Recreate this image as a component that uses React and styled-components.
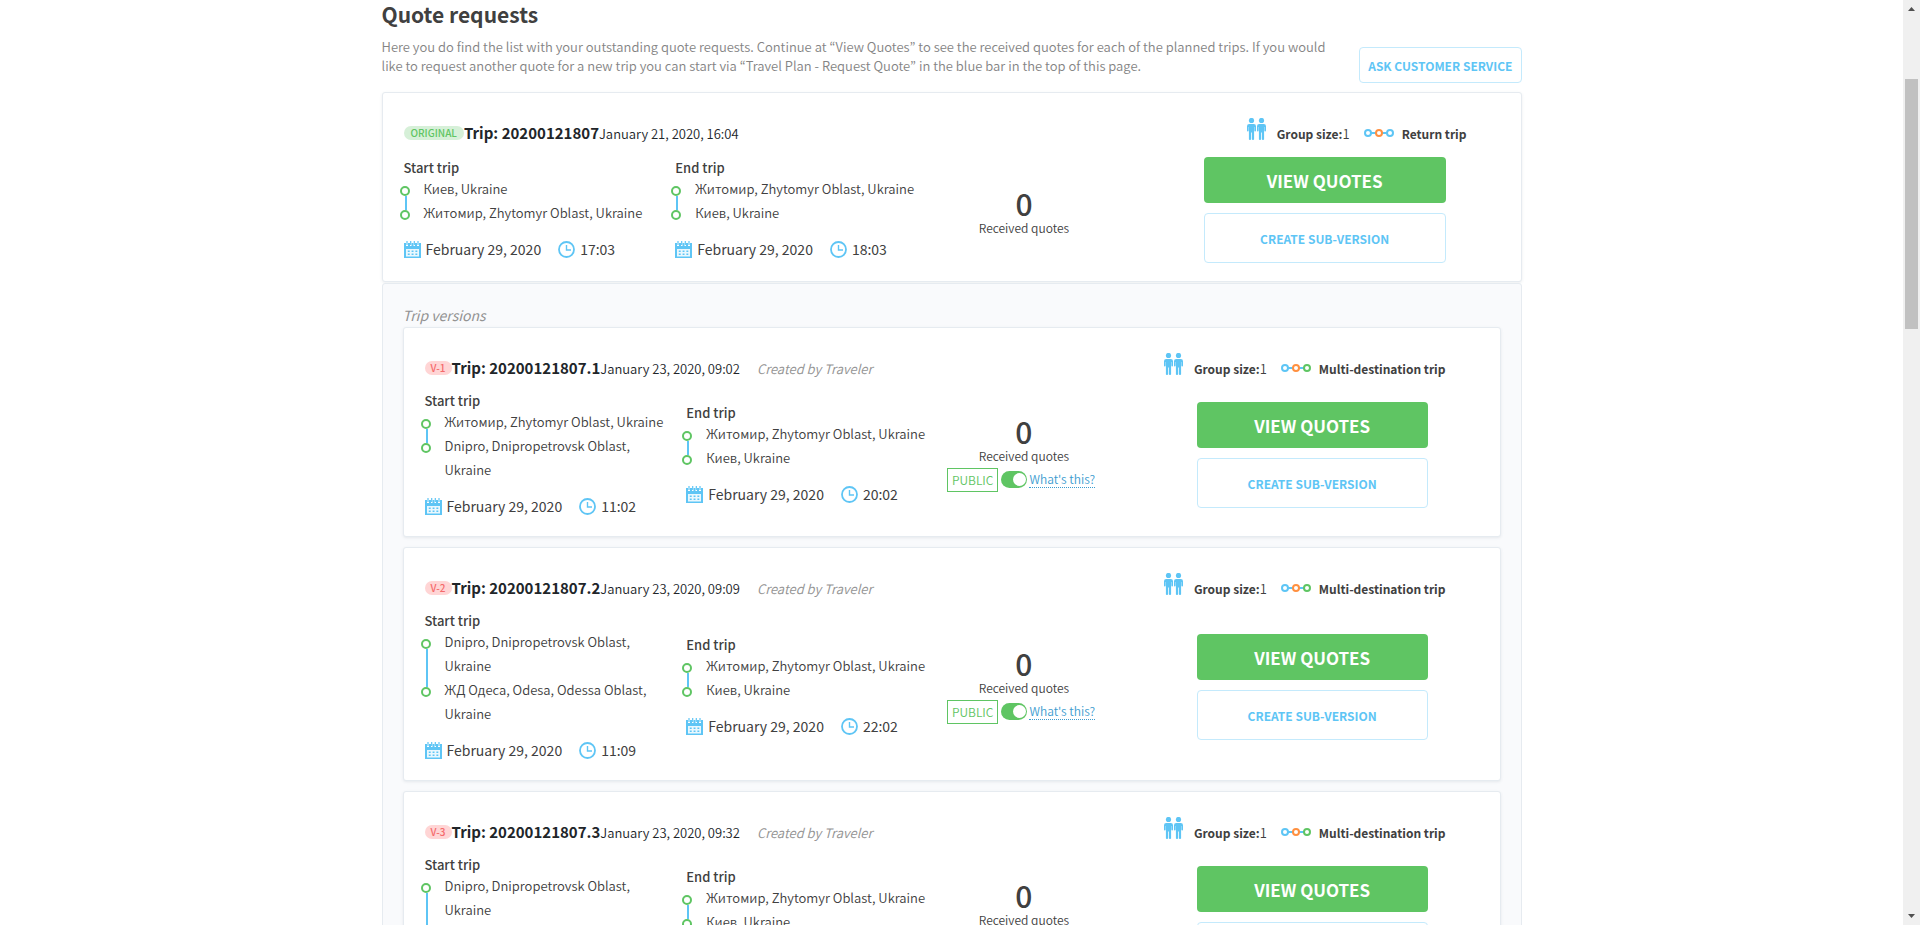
import React from "react";
import styled, { createGlobalStyle } from "styled-components";

const color = {
  text: "#404040",
  dark: "#212529",
  muted: "#848484",
  blue: "#5ec5f5",
  paleBlue: "#c4eafc",
  green: "#5fc563",
  orange: "#ff9040",
  border: "#e6ebf0",
  panel: "#f9fafc",
};

const GlobalStyle = createGlobalStyle`
  * { box-sizing: border-box; }
  body {
    margin: 0;
    background: #ffffff;
    color: ${color.text};
    font-family: "Noto Sans CJK KR", "Noto Sans", sans-serif;
    font-size: 13px;
    font-weight: 350;
    line-height: 19px;
  }
  button { font-family: inherit; cursor: pointer; }
`;

const Viewport = styled.div`
  display: flex;
  height: 100vh;
  overflow: hidden;
`;

const Page = styled.main`
  flex: 1;
  min-width: 0;
  overflow: hidden;
`;

const Container = styled.div`
  max-width: 1140px;
  margin: 0 auto;
`;

const ScrollTrack = styled.div`
  display: flex;
  flex-direction: column;
  align-items: center;
  width: 17px;
  background: #f0f0f0;
`;

const ScrollArrow = styled.svg`
  display: block;
  width: 17px;
  height: 17px;
  fill: #505050;
`;

const ScrollThumb = styled.div`
  width: 13px;
  height: 27%;
  margin: 62px 0 auto;
  background: #c1c1c1;
`;

const Title = styled.h1`
  margin: 0 0 9px;
  font-size: 21px;
  line-height: 28px;
  font-weight: 700;
`;

const Intro = styled.div`
  display: flex;
  align-items: flex-end;
  justify-content: space-between;
  margin-bottom: 9px;
`;

const IntroText = styled.p`
  flex: 0 1 956px;
  margin: 0;
  padding-bottom: 8px;
  color: ${color.muted};
`;

const OutlineButton = styled.button`
  height: ${(p) => (p.$large ? "50px" : "36px")};
  padding: 0 8px;
  border: 1px solid ${color.paleBlue};
  border-radius: 4px;
  background: #ffffff;
  color: ${color.blue};
  font-size: 12px;
  font-weight: 700;
  white-space: nowrap;
`;

const PrimaryButton = styled.button`
  height: 46px;
  border: 0;
  border-radius: 4px;
  background: ${color.green};
  color: #ffffff;
  font-size: 17px;
  font-weight: 700;
`;

const Card = styled.article`
  padding: 0 21px 17px;
  border: 1px solid ${color.border};
  border-radius: 3px;
  background: #ffffff;
  box-shadow: 0 1px 3px rgba(60, 80, 100, 0.1);
`;

const CardHeader = styled.header`
  display: flex;
  align-items: center;
  height: 64px;
  padding: 28px 0 12px;
  white-space: nowrap;
`;

const Badge = styled.span`
  height: 14px;
  padding: 0 ${(p) => (p.$original ? "7px" : "6px")};
  border-radius: 7px;
  background: ${(p) => (p.$original ? "#d6f0d8" : "#ffd5d5")};
  color: ${(p) => (p.$original ? color.green : "#f5696b")};
  font-size: 10px;
  line-height: 14px;
  font-weight: 500;
`;

const TripName = styled.h2`
  margin: 0;
  color: ${color.dark};
  font-size: 15px;
  line-height: 24px;
  font-weight: 700;
`;

const Created = styled.time`
  color: ${color.dark};
`;

const Author = styled.em`
  margin-left: 17px;
  color: #929292;
`;

const Facts = styled.div`
  display: flex;
  align-items: center;
  gap: 8px;
  height: 24px;
  margin: 0 33px 0 auto;
`;

const FactLabel = styled.span`
  font-size: 12px;
  font-weight: 700;
`;

const GroupSize = styled.span`
  margin-right: 6px;
  color: ${color.text};
`;

const PeopleSvg = styled.svg`
  align-self: flex-end;
  width: 20px;
  height: 22px;
  margin: 0 2px 5px 0;
  fill: ${color.blue};
`;

const RouteSvg = styled.svg`
  width: 30px;
  height: 10px;
  fill: #ffffff;
  stroke-width: 2;
`;

const CardBody = styled.div`
  display: grid;
  grid-template-columns: ${(p) =>
    p.$nested
      ? "262fr 261fr 154fr 96fr 231fr 51fr"
      : "272fr 273fr 152fr 104fr 242fr 54fr"};
  align-items: center;
  min-height: 107px;
`;

const Leg = styled.section`
  min-width: 0;
  padding-bottom: 1px;
`;

const LegTitle = styled.h3`
  margin: 0;
  font-size: 13px;
  line-height: 18px;
  font-weight: 500;
`;

const Stops = styled.ul`
  margin: 0 12px 12px -4px;
  padding: 0;
  list-style: none;
  line-height: 24px;
`;

const Stop = styled.li`
  display: flex;
  gap: 14px;
`;

const Marker = styled.span`
  display: flex;
  flex-direction: column;
  flex: 0 0 10px;
  padding-top: 9px;
`;

const Dot = styled.span`
  height: 10px;
  border: 2px solid ${color.green};
  border-radius: 50%;
`;

const Line = styled.span`
  flex: 1;
  width: 2px;
  margin: 0 0 -9px 5px;
  background: ${color.blue};
`;

const When = styled.div`
  display: flex;
  align-items: center;
  gap: 5px;
  font-size: 14px;
  font-weight: 400;
  line-height: 24px;
`;

const DateText = styled.span`
  margin-right: 12px;
`;

const SmallIcon = styled.svg`
  width: 17px;
  height: 17px;
  flex: none;
`;

const Quotes = styled.section`
  padding: 7px 0 1px;
  white-space: nowrap;
`;

const QuoteCount = styled.div`
  margin-bottom: 1px;
  font-size: 30px;
  line-height: 30px;
  font-weight: 500;
  text-align: center;
`;

const QuoteLabel = styled.div`
  margin-bottom: 4px;
  font-size: 12px;
  line-height: 17px;
  text-align: center;
`;

const Visibility = styled.div`
  display: flex;
  align-items: center;
  height: 24px;
  margin-bottom: 10px;
  font-size: 12px;
`;

const PublicLabel = styled.label`
  height: 24px;
  margin-right: 3px;
  padding: 0 4px;
  border: 1px solid ${color.green};
  color: ${color.green};
  line-height: 22px;
`;

const Switch = styled.input`
  appearance: none;
  display: flex;
  justify-content: flex-end;
  width: 26px;
  height: 17px;
  margin: 0 2px 0 0;
  padding: 2px 1px;
  border-radius: 9px;
  background: ${color.green};
  cursor: pointer;

  &::before {
    content: "";
    width: 13px;
    height: 13px;
    border-radius: 50%;
    background: #ffffff;
  }
`;

const HelpLink = styled.a`
  border-bottom: 1px dotted #3c9ccf;
  color: #3c9ccf;
  line-height: 16px;
  text-decoration: none;
`;

const Actions = styled.div`
  grid-column: 5;
  display: flex;
  flex-direction: column;
  gap: 10px;
  padding-bottom: 1px;
`;

const Versions = styled.section`
  display: flex;
  flex-direction: column;
  gap: 10px;
  margin-top: 1px;
  padding: 21px 20px;
  border: 1px solid ${color.border};
  border-radius: 3px;
  background: ${color.panel};
`;

const VersionsTitle = styled.h2`
  margin: 0 0 -8px;
  color: #929292;
  font-size: 14px;
  line-height: 20px;
  font-style: italic;
  font-weight: 400;
`;

const person = (x) => (
  <g transform={`translate(${x} 0)`}>
    <circle cx="4.5" cy="2.5" r="2.6" />
    <path d="M2.200 6h4.600Q9 6 9 8.300v4.200q0 1-.8 1t-.8-1V9h-.3v12.200q0 .8-1.100.800t-1.100-.8V14.500h-.8v6.700q0 .8-1.100.800t-1.100-.8V9h-.3v3.500q0 1-.8 1t-.8-1V8.300Q0 6 2.200 6z" />
  </g>
);

const PeopleIcon = () => (
  <PeopleSvg viewBox="0 0 20 22" aria-hidden="true">
    {person(0)}
    {person(10)}
  </PeopleSvg>
);

const RouteIcon = ({ end }) => (
  <RouteSvg viewBox="0 0 30 10" aria-hidden="true">
    <path d="M7 5h5M18 5h5" stroke={color.blue} />
    <circle cx="4" cy="5" r="3" stroke={color.blue} />
    <circle cx="15" cy="5" r="3" stroke={color.orange} />
    <circle cx="26" cy="5" r="3" stroke={end} />
  </RouteSvg>
);

const CalendarIcon = () => (
  <SmallIcon viewBox="0 0 17 17" aria-hidden="true">
    <path d="M0 2h2v3h2V2h2v3h1.500V2h2v3H11V2h2v3h2V2h2v15H0z" fill={color.blue} />
    <path d="M3 0v4M6.700 0v4M10.300 0v4M14 0v4" stroke={color.blue} strokeWidth="1.200" />
    <path d="M2 8h13v7.500H2z" fill="#eaf8fe" />
    <path d="M3.800 10.300h9.500M3.800 13.300h9.500" stroke={color.blue} strokeWidth="1.600" strokeDasharray="1.900 1.900" />
  </SmallIcon>
);

const ClockIcon = () => (
  <SmallIcon viewBox="0 0 17 17" fill="none" stroke={color.blue} aria-hidden="true">
    <circle cx="8.500" cy="8.500" r="7.500" strokeWidth="1.800" />
    <path d="M8.500 4v5H13" strokeWidth="1.400" />
  </SmallIcon>
);

const TripLeg = ({ title, stops, date, time }) => (
  <Leg>
    <LegTitle>{title}</LegTitle>
    <Stops>
      {stops.map((stop, i) => (
        <Stop key={stop}>
          <Marker>
            <Dot />
            {i < stops.length - 1 && <Line />}
          </Marker>
          <span>{stop}</span>
        </Stop>
      ))}
    </Stops>
    <When>
      <CalendarIcon />
      <DateText>{date}</DateText>
      <ClockIcon />
      <span>{time}</span>
    </When>
  </Leg>
);

const TripCard = ({ trip, nested }) => (
  <Card>
    <CardHeader>
      <Badge $original={!nested}>{trip.badge}</Badge>
      <TripName>Trip: {trip.id}</TripName>
      <Created>{trip.created}</Created>
      {nested && <Author>Created by Traveler</Author>}
      <Facts>
        <PeopleIcon />
        <GroupSize>
          <FactLabel>Group size:</FactLabel>1
        </GroupSize>
        <RouteIcon end={nested ? color.green : color.blue} />
        <FactLabel>{trip.kind}</FactLabel>
      </Facts>
    </CardHeader>
    <CardBody $nested={nested}>
      <TripLeg title="Start trip" {...trip.start} />
      <TripLeg title="End trip" {...trip.end} />
      <Quotes>
        <QuoteCount>0</QuoteCount>
        <QuoteLabel>Received quotes</QuoteLabel>
        {nested && (
          <Visibility>
            <PublicLabel htmlFor={`public-${trip.id}`}>PUBLIC</PublicLabel>
            <Switch type="checkbox" role="switch" id={`public-${trip.id}`} defaultChecked />
            <HelpLink href="#public">What's this?</HelpLink>
          </Visibility>
        )}
      </Quotes>
      <Actions>
        <PrimaryButton type="button">VIEW QUOTES</PrimaryButton>
        <OutlineButton type="button" $large>CREATE SUB-VERSION</OutlineButton>
      </Actions>
    </CardBody>
  </Card>
);

const KYIV = "Киев, Ukraine";
const ZHYTOMYR = "Житомир, Zhytomyr Oblast, Ukraine";
const DNIPRO = "Dnipro, Dnipropetrovsk Oblast, Ukraine";
const ODESA = "ЖД Одеса, Odesa, Odessa Oblast, Ukraine";
const DAY = "February 29, 2020";

const original = {
  badge: "ORIGINAL",
  id: "20200121807",
  created: "January 21, 2020, 16:04",
  kind: "Return trip",
  start: { stops: [KYIV, ZHYTOMYR], date: DAY, time: "17:03" },
  end: { stops: [ZHYTOMYR, KYIV], date: DAY, time: "18:03" },
};

const versions = [
  {
    badge: "V-1",
    id: "20200121807.1",
    created: "January 23, 2020, 09:02",
    kind: "Multi-destination trip",
    start: { stops: [ZHYTOMYR, DNIPRO], date: DAY, time: "11:02" },
    end: { stops: [ZHYTOMYR, KYIV], date: DAY, time: "20:02" },
  },
  {
    badge: "V-2",
    id: "20200121807.2",
    created: "January 23, 2020, 09:09",
    kind: "Multi-destination trip",
    start: { stops: [DNIPRO, ODESA], date: DAY, time: "11:09" },
    end: { stops: [ZHYTOMYR, KYIV], date: DAY, time: "22:02" },
  },
  {
    badge: "V-3",
    id: "20200121807.3",
    created: "January 23, 2020, 09:32",
    kind: "Multi-destination trip",
    start: { stops: [DNIPRO, ZHYTOMYR], date: DAY, time: "11:32" },
    end: { stops: [ZHYTOMYR, KYIV], date: DAY, time: "22:02" },
  },
];

export default function App() {
  return (
    <>
      <GlobalStyle />
      <Viewport>
        <Page>
          <Container>
            <Title>Quote requests</Title>
            <Intro>
              <IntroText>
                Here you do find the list with your outstanding quote requests. Continue at “View
                Quotes” to see the received quotes for each of the planned trips. If you would like
                to request another quote for a new trip you can start via “Travel Plan - Request
                Quote” in the blue bar in the top of this page.
              </IntroText>
              <OutlineButton type="button">ASK CUSTOMER SERVICE</OutlineButton>
            </Intro>
            <TripCard trip={original} />
            <Versions>
              <VersionsTitle>Trip versions</VersionsTitle>
              {versions.map((trip) => (
                <TripCard key={trip.id} trip={trip} nested />
              ))}
            </Versions>
          </Container>
        </Page>
        <ScrollTrack aria-hidden="true">
          <ScrollArrow viewBox="0 0 17 17"><path d="M5 11l3.500-4L12 11z" /></ScrollArrow>
          <ScrollThumb />
          <ScrollArrow viewBox="0 0 17 17"><path d="M5 6h7l-3.500 4z" /></ScrollArrow>
        </ScrollTrack>
      </Viewport>
    </>
  );
}
